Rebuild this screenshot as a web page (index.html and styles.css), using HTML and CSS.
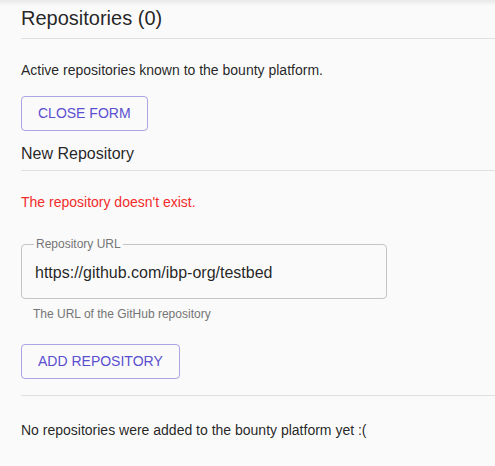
FILE: index.html
```html
<!DOCTYPE html>
<html lang="en">
<head>
<meta charset="utf-8">
<title>Repositories</title>
<link rel="stylesheet" href="styles.css">
</head>
<body>
<main class="page">
  <h1 class="title">Repositories (0)</h1>
  <p class="intro">Active repositories known to the bounty platform.</p>
  <button class="btn btn-close" type="button">Close form</button>
  <h2 class="subtitle">New Repository</h2>
  <p class="error">The repository doesn't exist.</p>
  <div class="field">
    <fieldset class="outline">
      <legend class="label">Repository URL</legend>
      <input class="input" type="text" value="https://github.com/ibp-org/testbed">
    </fieldset>
    <p class="helper">The URL of the GitHub repository</p>
  </div>
  <div class="actions">
    <button class="btn" type="button">Add repository</button>
  </div>
  <p class="empty">No repositories were added to the bounty platform yet :(</p>
</main>
</body>
</html>
```
FILE: styles.css
```css
html, body {
  margin: 0;
  padding: 0;
}
body {
  background: linear-gradient(rgba(0,0,0,0.07), rgba(0,0,0,0) 6px) no-repeat, #fafafa;
  font-family: "Liberation Sans", Arial, sans-serif;
  color: rgba(0,0,0,0.87);
  min-height: 466px;
}
.page {
  padding-left: 21px;
  display: flex;
  flex-direction: column;
  align-items: flex-start;
}
.title {
  align-self: stretch;
  margin: 0;
  padding: 6px 0 7px;
  font-size: 20px;
  line-height: 25px;
  font-weight: 400;
  border-bottom: 1px solid #e0e0e0;
}
.intro {
  margin: 21px 0 0;
  font-size: 14px;
  line-height: 20px;
}
.btn {
  margin: 16px 0 0;
  height: 35px;
  padding: 0 16px;
  border: 1px solid rgba(90,79,207,0.5);
  border-radius: 4px;
  background: transparent;
  color: #5a4fcf;
  font-family: "Liberation Sans", Arial, sans-serif;
  font-size: 14px;
  line-height: 33px;
  text-transform: uppercase;
  cursor: pointer;
}
.subtitle {
  align-self: stretch;
  margin: 11px 0 0;
  padding: 0 0 4px;
  font-size: 16px;
  line-height: 24px;
  font-weight: 400;
  border-bottom: 1px solid #e0e0e0;
}
.error {
  margin: 21px 0 0;
  font-size: 14px;
  line-height: 20px;
  color: #f32b2b;
}
.field {
  margin-top: 26px;
}
.outline {
  box-sizing: border-box;
  width: 366px;
  margin: 0;
  padding: 0 12px;
  border: 1px solid #c4c4c4;
  border-radius: 4px;
}
.label {
  padding: 0 2px;
  font-size: 12px;
  line-height: 12px;
  color: #757575;
}
.input {
  display: block;
  box-sizing: border-box;
  width: 100%;
  margin: 0 0 0 1px;
  padding: 13px 0 15px;
  border: 0;
  outline: none;
  background: transparent;
  font-family: "Liberation Sans", Arial, sans-serif;
  font-size: 16px;
  line-height: 20px;
  height: 48px;
  color: rgba(0,0,0,0.87);
}
.helper {
  margin: 7px 0 0 12px;
  font-size: 12px;
  line-height: 16px;
  color: #757575;
}
.actions {
  align-self: stretch;
  margin-top: 6px;
  padding-bottom: 16px;
  border-bottom: 1px solid #e0e0e0;
}
.empty {
  margin: 24px 0 0;
  font-size: 14px;
  line-height: 20px;
}
```
